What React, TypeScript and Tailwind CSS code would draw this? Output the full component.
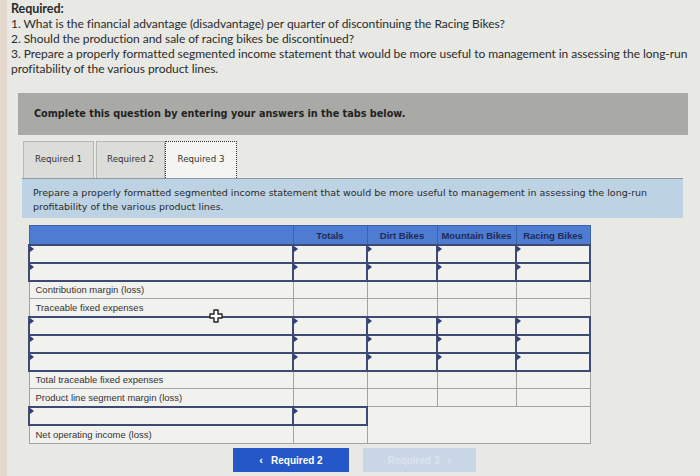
import React from "react";

const cols = ["Totals", "Dirt Bikes", "Mountain Bikes", "Racing Bikes"];

type Row = { label?: string; input?: boolean };

const rows: Row[] = [
  { input: true },
  { input: true },
  { label: "Contribution margin (loss)" },
  { label: "Traceable fixed expenses" },
  { input: true },
  { input: true },
  { input: true },
  { label: "Total traceable fixed expenses" },
  { label: "Product line segment margin (loss)" },
];

function Marker() {
  return (
    <span className="absolute left-0 top-0 h-0 w-0 border-l-[4px] border-t-[3px] border-b-[3px] border-l-[#2e3f78] border-t-transparent border-b-transparent" />
  );
}

function InputCell() {
  return (
    <td className="relative h-[18px] border-2 border-[#3e4a72] bg-[#f1f1ee] p-0">
      <Marker />
    </td>
  );
}

function PlainCell({ children }: { children?: React.ReactNode }) {
  return (
    <td className="h-[18px] border border-[#a3a3a0] bg-[#f1f1ee] px-[6px] py-0 text-left text-[9.5px] leading-none text-[#333]">
      {children}
    </td>
  );
}

function CursorIcon() {
  return (
    <svg width="14" height="14" viewBox="0 0 14 14" className="absolute left-[181px] top-[-8px]">
      <path
        d="M5 1h4v4h4v4H9v4H5V9H1V5h4z"
        fill="#fff"
        stroke="#222"
        strokeWidth="1.4"
        strokeLinejoin="round"
      />
    </svg>
  );
}

export default function App() {
  return (
    <div className="flex h-[476px] w-[700px] overflow-hidden bg-[#e8e8e4] font-['Lato',sans-serif] text-[#2b2b2b]">
      <div className="w-[7px] shrink-0 bg-[#e4d8cd]" />
      <div className="flex-1">
        {/* Instructions */}
        <div className="pl-[4px] pt-[1px] text-[12px] leading-[15px] tracking-[-0.05px]">
          <div className="text-[12.5px] font-bold">Required:</div>
          <div>1. What is the financial advantage (disadvantage) per quarter of discontinuing the Racing Bikes?</div>
          <div>2. Should the production and sale of racing bikes be discontinued?</div>
          <div className="whitespace-nowrap">3. Prepare a properly formatted segmented income statement that would be more useful to management in assessing the long-run</div>
          <div>profitability of the various product lines.</div>
        </div>

        <div className="mt-[17px] ml-[11px] mr-[12px] flex h-[42px] items-center bg-[#a9aaa5] pl-[16px] font-['DejaVu_Sans',sans-serif] text-[9.7px] font-bold text-[#222]">
          Complete this question by entering your answers in the tabs below.
        </div>

        {/* Tabs */}
        <div className="ml-[16px] mt-[6px] flex h-[37px] items-stretch font-['DejaVu_Sans',sans-serif] text-[8.7px] text-[#333]">
          <div className="flex w-[71px] items-center justify-center border border-b-0 border-[#b9b9b4] bg-[#dcdcd8]">Required 1</div>
          <div className="ml-[2px] flex w-[69px] items-center justify-center border border-b-0 border-[#b9b9b4] bg-[#dcdcd8]">Required 2</div>
          <div className="flex w-[72px] items-center justify-center border border-dotted border-b-0 border-[#333] bg-[#f4f4f2]">Required 3</div>
        </div>

        <div className="ml-[15px] mr-[17px] h-[40px] border-t border-[#8b98a5] bg-[#bdd2e3] pl-[11px] pt-[7px] font-['DejaVu_Sans',sans-serif] text-[9.5px] leading-[14px] text-[#2a2a2a]">
          <div className="whitespace-nowrap">Prepare a properly formatted segmented income statement that would be more useful to management in assessing the long-run</div>
          <div>profitability of the various product lines.</div>
        </div>

        {/* Statement */}
        <div className="relative ml-[21px] mt-[7px] w-[561px] font-['Liberation_Sans',sans-serif]">
          <table className="w-full table-fixed border-collapse">
            <colgroup>
              <col className="w-[264px]" />
              <col className="w-[74px]" />
              <col className="w-[70px]" />
              <col className="w-[79px]" />
              <col className="w-[74px]" />
            </colgroup>
            <thead>
              <tr className="h-[19px] bg-[#4e7cd3]">
                <th className="border border-[#3d62a8] p-0" />
                {cols.map((c) => (
                  <th key={c} className="border border-[#3d62a8] p-0 pt-[2px] text-center align-middle text-[9.5px] font-bold text-[#1e2b52]">
                    {c}
                  </th>
                ))}
              </tr>
            </thead>
            <tbody>
              {rows.map((r, i) => (
                <tr key={i} className="h-[18px]">
                  {r.input ? (
                    <>
                      <InputCell />
                      {cols.map((c) => (
                        <InputCell key={c} />
                      ))}
                    </>
                  ) : (
                    <>
                      <PlainCell>{r.label}</PlainCell>
                      {cols.map((c) => (
                        <PlainCell key={c} />
                      ))}
                    </>
                  )}
                </tr>
              ))}
              <tr className="h-[18px]">
                <InputCell />
                <InputCell />
                <td colSpan={3} rowSpan={2} className="border border-[#a3a3a0] bg-[#f1f1ee] p-0" />
              </tr>
              <tr className="h-[19px]">
                <PlainCell>Net operating income (loss)</PlainCell>
                <PlainCell />
              </tr>
            </tbody>
          </table>
          <div className="absolute left-0 top-[92px] h-[20px] w-full">
            <CursorIcon />
          </div>
        </div>

        {/* Navigation */}
        <div className="ml-[226px] mt-[4px] flex items-start gap-[14px]">
          <button className="flex h-[24px] w-[116px] items-center justify-center gap-[8px] bg-[#2458c8] font-['Liberation_Sans',sans-serif] text-[10px] font-bold text-white">
            <span className="text-[11px]">‹</span>
            <span>Required 2</span>
          </button>
          <button className="flex h-[24px] w-[113px] items-center justify-center gap-[8px] bg-[#c9d6e6] font-['Liberation_Sans',sans-serif] text-[10px] font-bold text-[#dbe4ef]">
            <span>Required 3</span>
            <span className="text-[11px]">›</span>
          </button>
        </div>
      </div>
    </div>
  );
}
